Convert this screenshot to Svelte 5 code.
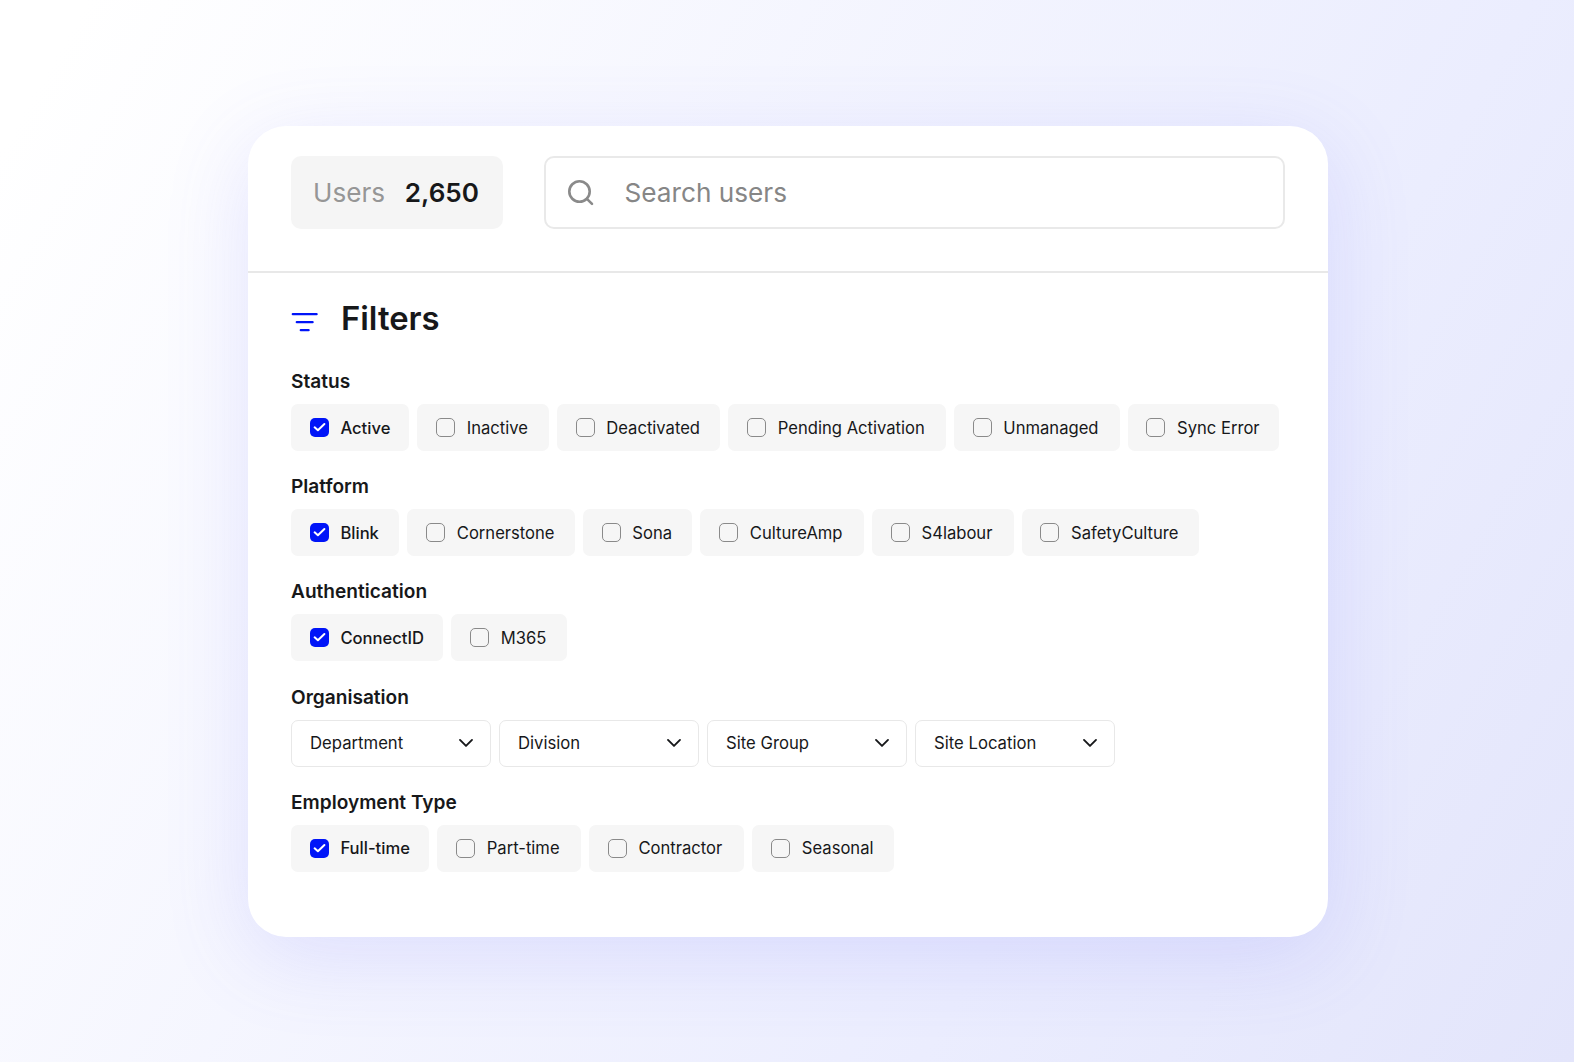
<script lang="ts">
	interface Option {
		label: string;
		width: number;
		checked?: boolean;
	}

	interface Group {
		title: string;
		options?: Option[];
		selects?: string[];
	}

	const total = '2,650';

	let query = $state('');
	let groups = $state<Group[]>([
		{
			title: 'Status',
			options: [
				{ label: 'Active', width: 118.4, checked: true },
				{ label: 'Inactive', width: 131.5 },
				{ label: 'Deactivated', width: 163.6 },
				{ label: 'Pending Activation', width: 217.5 },
				{ label: 'Unmanaged', width: 165.7 },
				{ label: 'Sync Error', width: 151 }
			]
		},
		{
			title: 'Platform',
			options: [
				{ label: 'Blink', width: 108.4, checked: true },
				{ label: 'Cornerstone', width: 167.6 },
				{ label: 'Sona', width: 109.5 },
				{ label: 'CultureAmp', width: 163.7 },
				{ label: 'S4labour', width: 141.5 },
				{ label: 'SafetyCulture', width: 177 }
			]
		},
		{
			title: 'Authentication',
			options: [
				{ label: 'ConnectID', width: 152.4, checked: true },
				{ label: 'M365', width: 115.5 }
			]
		},
		{
			title: 'Organisation',
			selects: ['Department', 'Division', 'Site Group', 'Site Location']
		},
		{
			title: 'Employment Type',
			options: [
				{ label: 'Full-time', width: 138.4, checked: true },
				{ label: 'Part-time', width: 143.7 },
				{ label: 'Contractor', width: 155.4 },
				{ label: 'Seasonal', width: 141.4 }
			]
		}
	]);
</script>

<main>
	<section class="card">
		<header>
			<div class="count">
				<span>Users</span>
				<strong>{total}</strong>
			</div>
			<label class="search">
				<svg width="28" height="28" viewBox="0 0 28 28" fill="none">
					<circle cx="13.5" cy="12.5" r="10.2" />
					<path d="M20.9 19.8 L26 24.9" />
				</svg>
				<input type="text" placeholder="Search users" bind:value={query} />
			</label>
		</header>

		<div class="filters">
			<div class="heading">
				<svg width="28" height="20" viewBox="0 0 28 20" fill="none">
					<path d="M1.8 2.2H25.6M5.8 10.2H21.6M9.8 18.2H17.6" />
				</svg>
				<h1>Filters</h1>
			</div>

			{#each groups as group (group.title)}
				<div class="group">
					<h2>{group.title}</h2>
					<div class="row">
						{#each group.options ?? [] as option (option.label)}
							<label class="chip" class:checked={option.checked} style:width="{option.width}px">
								<input type="checkbox" bind:checked={option.checked} />
								<span class="box">
									<svg width="19" height="19" viewBox="0 0 19 19" fill="none">
										<path d="M4.6 9.3 L7.9 12.3 L14.4 6" />
									</svg>
								</span>
								<span class="label">{option.label}</span>
							</label>
						{/each}
						{#each group.selects ?? [] as name (name)}
							<button type="button" class="select">
								<span>{name}</span>
								<svg width="16" height="10" viewBox="0 0 16 10" fill="none">
									<path d="M2 1.9 L8 7.9 L14 1.9" />
								</svg>
							</button>
						{/each}
					</div>
				</div>
			{/each}
		</div>
	</section>
</main>

<style>
	:global(body) {
		margin: 0;
	}

	main {
		box-sizing: border-box;
		width: 1574px;
		height: 1062px;
		padding: 126px 246px 0 248px;
		overflow: hidden;
		background: linear-gradient(120deg, #ffffff 4%, #ebedfe 70%, #e3e5fb 100%);
		font-family: Inter, sans-serif;
		color: #17181a;
	}

	.card {
		height: 811px;
		border-radius: 38px;
		background: #fff;
		box-shadow: 0 20px 85px rgba(105, 105, 250, 0.16);
	}

	header {
		display: flex;
		gap: 41px;
		height: 147px;
		box-sizing: border-box;
		padding: 30px 43px 0;
		border-bottom: 2px solid #e8e8e8;
	}

	.count {
		display: flex;
		flex: none;
		align-items: center;
		justify-content: space-between;
		width: 212px;
		height: 73px;
		box-sizing: border-box;
		padding: 0 24px 0 22px;
		border-radius: 10px;
		background: #f5f5f5;
		font-size: 26.1px;
	}

	.count span {
		color: #969696;
	}

	.count strong {
		font-weight: 600;
	}

	.search {
		display: flex;
		flex: 1;
		align-items: center;
		gap: 30.5px;
		height: 73px;
		box-sizing: border-box;
		padding: 0 20px;
		border: 2px solid #e9e9e9;
		border-radius: 10px;
	}

	.search svg {
		flex: none;
		stroke: #8a8a8a;
		stroke-width: 2.6;
		stroke-linecap: round;
	}

	.search input {
		flex: 1;
		border: none;
		outline: none;
		padding: 0;
		background: none;
		font: inherit;
		font-size: 26.2px;
		color: inherit;
	}

	.search input::placeholder {
		color: #868686;
	}

	.filters {
		padding: 25px 43px 0;
	}

	.heading {
		display: flex;
		align-items: center;
		gap: 22px;
		height: 40px;
		margin-bottom: 31px;
	}

	.heading svg {
		margin-top: 8px;
		stroke: #0014f8;
		stroke-width: 2.3;
		stroke-linecap: round;
	}

	h1 {
		margin: 0;
		font-size: 32.8px;
		font-weight: 600;
	}

	.group {
		height: 105.22px;
	}

	h2 {
		margin: 0 0 11px;
		font-size: 19.1px;
		font-weight: 600;
		line-height: 24px;
	}

	.row {
		display: flex;
		gap: 8px;
	}

	.chip {
		display: flex;
		flex: none;
		align-items: center;
		gap: 11.7px;
		height: 47px;
		box-sizing: border-box;
		padding-left: 18.7px;
		border-radius: 7px;
		background: #f6f6f6;
		font-size: 16.6px;
		white-space: nowrap;
	}

	.chip input {
		position: absolute;
		opacity: 0;
	}

	.box {
		width: 19px;
		height: 19px;
		box-sizing: border-box;
		border: 1px solid #8a8a8a;
		border-radius: 5px;
	}

	.box svg {
		display: none;
		stroke: #fff;
		stroke-width: 2;
		stroke-linecap: round;
		stroke-linejoin: round;
	}

	.checked .box {
		border: none;
		background: #0014f8;
	}

	.checked .box svg {
		display: block;
	}

	.checked .label {
		font-weight: 500;
	}

	.select {
		display: flex;
		align-items: center;
		justify-content: space-between;
		width: 200px;
		height: 47px;
		box-sizing: border-box;
		padding: 0 16px 0 18px;
		border: 1px solid #e8e8e8;
		border-radius: 7px;
		background: #fff;
		font: inherit;
		font-size: 16.7px;
		color: inherit;
	}

	.select svg {
		stroke: #17181a;
		stroke-width: 1.9;
		stroke-linecap: round;
		stroke-linejoin: round;
	}
</style>
